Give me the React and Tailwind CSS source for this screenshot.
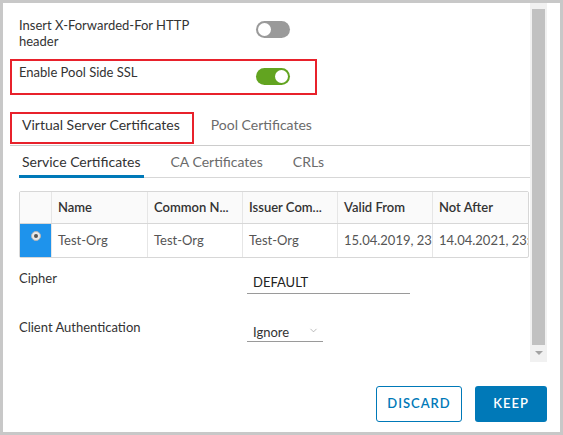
import React from 'react';
import { ChevronDown } from 'lucide-react';

const Toggle = ({ on }) => (
  <div
    className={`w-[34px] h-[17px] rounded-full flex items-center px-[2px] ${
      on ? 'bg-[#62a420] justify-end' : 'bg-[#9a9a9a] justify-start'
    }`}
  >
    <div className="w-[13px] h-[13px] rounded-full bg-white" />
  </div>
);

const cols = [
  { label: 'Name', w: 'w-[96px]', val: 'Test-Org' },
  { label: 'Common N...', w: 'w-[95px]', val: 'Test-Org' },
  { label: 'Issuer Com...', w: 'w-[95px]', val: 'Test-Org' },
  { label: 'Valid From', w: 'w-[95px]', val: '15.04.2019, 23:59' },
  { label: 'Not After', w: 'flex-1', val: '14.04.2021, 23:59' },
];

export default function App() {
  return (
    <div className="w-[563px] h-[435px] border-[3px] border-[#c8c8c8] bg-white flex flex-col font-['Lato','Open_Sans',sans-serif] text-[#333]">
      <div className="flex h-[359px]">
        {/* scrolling body */}
        <div className="flex-1 min-w-0 overflow-hidden pl-4 pt-[14px] relative">
          <div className="flex">
            <div className="w-[237px] text-[13px] leading-[16px] text-[#333]">
              Insert X-Forwarded-For HTTP
              <br />
              header
            </div>
            <div className="mt-[4px]">
              <Toggle on={false} />
            </div>
          </div>

          <div className="flex mt-[15px] relative">
            <div className="w-[237px] text-[13px] leading-[16px] text-[#333]">Enable Pool Side SSL</div>
            <div className="mt-[4px]">
              <Toggle on />
            </div>
            <div className="absolute left-[-9px] top-[-5px] w-[307px] h-[36px] border-2 border-[#e8212b]" />
          </div>

          {/* main tabs */}
          <div className="ml-[-9px] mt-[27px] flex border-b border-[#cccccc] h-[34px] relative">
            <div className="pl-[12px] pr-[12px] pt-[2px] text-[14px] text-[#333]">Virtual Server Certificates</div>
            <div className="pl-[19px] pt-[2px] text-[14px] text-[#6b6b6b]">Pool Certificates</div>
            <div className="absolute left-0 top-0 w-[184px] h-[32px] border-2 border-[#e8212b]" />
          </div>

          {/* sub tabs */}
          <div className="flex border-b border-[#d7d7d7] h-[32px] items-start pt-[5px]">
            <div className="relative px-[3px] text-[14px] text-[#333] h-[26px]">
              Service Certificates
              <div className="absolute left-0 right-0 bottom-[-1px] h-[3px] bg-[#0079b8]" />
            </div>
            <div className="ml-[27px] text-[14px] text-[#6b6b6b]">CA Certificates</div>
            <div className="ml-[30px] text-[14px] text-[#6b6b6b]">CRLs</div>
          </div>

          {/* datagrid */}
          <div className="mt-[13px] mr-[1px] border border-[#d7d7d7] rounded-[2px] text-[13px]">
            <div className="flex h-[32px] bg-[#fafafa] border-b border-[#d7d7d7]">
              <div className="w-[32px] shrink-0 border-r border-[#e6e6e6]" />
              {cols.map((c, i) => (
                <div
                  key={c.label}
                  className={`${c.w} min-w-0 shrink-0 px-[6px] flex items-center font-semibold text-[#333] whitespace-nowrap overflow-hidden ${
                    i < cols.length - 1 ? 'border-r border-[#e6e6e6]' : ''
                  }`}
                >
                  {c.label}
                </div>
              ))}
            </div>
            <div className="flex h-[33px]">
              <div className="w-[32px] shrink-0 bg-[#1e93ec] flex justify-center pt-[7px] border-r border-[#e6e6e6]">
                <div className="w-[10px] h-[10px] rounded-full bg-[#e9e9e9] border border-[#b5b5b5] flex items-center justify-center">
                  <div className="w-[4px] h-[4px] rounded-full bg-[#555]" />
                </div>
              </div>
              {cols.map((c, i) => (
                <div
                  key={c.label}
                  className={`${c.w} min-w-0 shrink-0 pl-[6px] flex items-center text-[#555] whitespace-nowrap overflow-hidden ${
                    i < cols.length - 1 ? 'border-r border-[#e6e6e6]' : ''
                  }`}
                >
                  {c.val}
                </div>
              ))}
            </div>
          </div>

          {/* cipher */}
          <div className="flex mt-[12px]">
            <div className="w-[228px] text-[13px] leading-[16px] text-[#333]">Cipher</div>
            <div className="w-[163px] mt-[4px] border-b border-[#9a9a9a] pl-[6px] pb-[3px] text-[13px] leading-[16px] text-[#222]">
              DEFAULT
            </div>
          </div>

          <div className="flex mt-[25px]">
            <div className="w-[228px] text-[13px] leading-[16px] text-[#333]">Client Authentication</div>
            <div className="w-[76px] mt-[5px] border-b border-[#9a9a9a] pl-[6px] pb-[1px] text-[13px] leading-[16px] text-[#333] flex items-center justify-between pr-[4px]">
              Ignore
              <ChevronDown size={11} strokeWidth={1.5} className="text-[#9a9a9a] mt-[-4px]" />
            </div>
          </div>
        </div>

        {/* scrollbar */}
        <div className="w-[17px] shrink-0 bg-[#f1f1f1] flex flex-col items-center pt-[6px]">
          <div className="w-[13px] h-[336px] bg-[#c1c1c1]" />
          <div className="mt-[6px] w-0 h-0 border-l-[4px] border-r-[4px] border-t-[4px] border-l-transparent border-r-transparent border-t-[#a3a3a3]" />
        </div>
        <div className="w-[13px] shrink-0" />
      </div>

      {/* footer */}
      <div className="flex justify-end gap-[13px] pr-[13px] pt-[24px]">
        <button className="w-[86px] h-[36px] border border-[#0079b8] rounded-[3px] text-[#0079b8] text-[13px] font-semibold tracking-[1px] bg-white">
          DISCARD
        </button>
        <button className="w-[72px] h-[36px] rounded-[3px] bg-[#0079b8] text-white text-[13px] font-semibold tracking-[1px]">
          KEEP
        </button>
      </div>
    </div>
  );
}
